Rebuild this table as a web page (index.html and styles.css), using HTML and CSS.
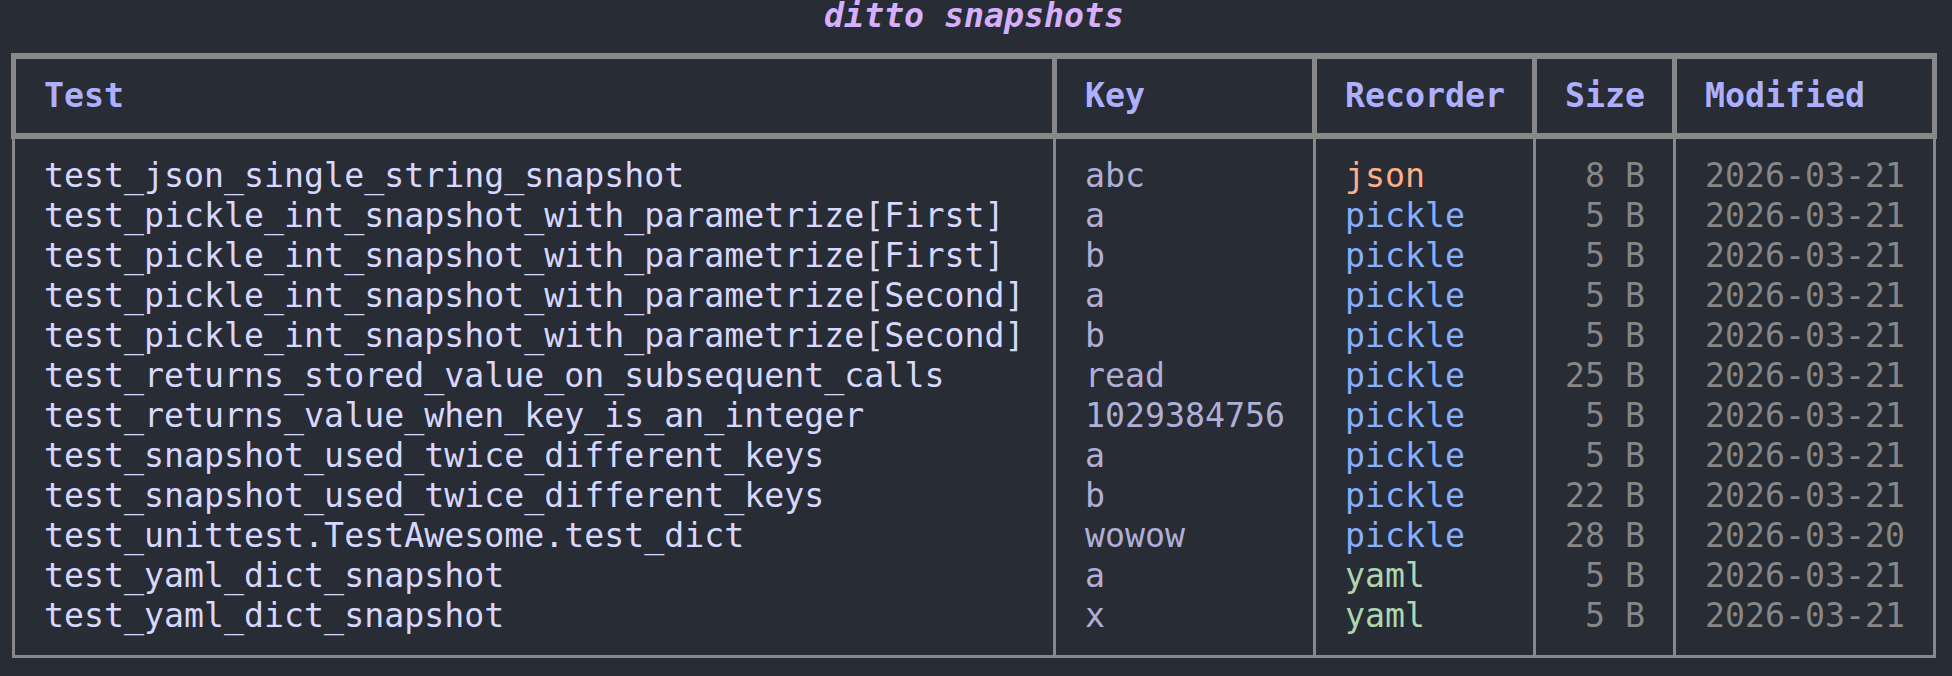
FILE: index.html
```html
<!DOCTYPE html>
<html lang="en">

<head>
    <meta charset="UTF-8">
    <meta name="viewport" content="width=device-width, initial-scale=1.0">
    <title>ditto snapshots</title>
    <link rel="stylesheet" href="styles.css">
</head>

<body>
    <div class="console">
        <div class="title">ditto snapshots</div>

        <div class="head">
            <div class="cell">Test</div>
            <div class="cell">Key</div>
            <div class="cell">Recorder</div>
            <div class="cell">Size</div>
            <div class="cell">Modified</div>
        </div>

        <div class="body">
            <div class="row">
                <div class="cell test">test_json_single_string_snapshot</div>
                <div class="cell key">abc</div>
                <div class="cell json">json</div>
                <div class="cell size">8 B</div>
                <div class="cell date">2026-03-21</div>
            </div>
            <div class="row">
                <div class="cell test">test_pickle_int_snapshot_with_parametrize[First]</div>
                <div class="cell key">a</div>
                <div class="cell pickle">pickle</div>
                <div class="cell size">5 B</div>
                <div class="cell date">2026-03-21</div>
            </div>
            <div class="row">
                <div class="cell test">test_pickle_int_snapshot_with_parametrize[First]</div>
                <div class="cell key">b</div>
                <div class="cell pickle">pickle</div>
                <div class="cell size">5 B</div>
                <div class="cell date">2026-03-21</div>
            </div>
            <div class="row">
                <div class="cell test">test_pickle_int_snapshot_with_parametrize[Second]</div>
                <div class="cell key">a</div>
                <div class="cell pickle">pickle</div>
                <div class="cell size">5 B</div>
                <div class="cell date">2026-03-21</div>
            </div>
            <div class="row">
                <div class="cell test">test_pickle_int_snapshot_with_parametrize[Second]</div>
                <div class="cell key">b</div>
                <div class="cell pickle">pickle</div>
                <div class="cell size">5 B</div>
                <div class="cell date">2026-03-21</div>
            </div>
            <div class="row">
                <div class="cell test">test_returns_stored_value_on_subsequent_calls</div>
                <div class="cell key">read</div>
                <div class="cell pickle">pickle</div>
                <div class="cell size">25 B</div>
                <div class="cell date">2026-03-21</div>
            </div>
            <div class="row">
                <div class="cell test">test_returns_value_when_key_is_an_integer</div>
                <div class="cell key">1029384756</div>
                <div class="cell pickle">pickle</div>
                <div class="cell size">5 B</div>
                <div class="cell date">2026-03-21</div>
            </div>
            <div class="row">
                <div class="cell test">test_snapshot_used_twice_different_keys</div>
                <div class="cell key">a</div>
                <div class="cell pickle">pickle</div>
                <div class="cell size">5 B</div>
                <div class="cell date">2026-03-21</div>
            </div>
            <div class="row">
                <div class="cell test">test_snapshot_used_twice_different_keys</div>
                <div class="cell key">b</div>
                <div class="cell pickle">pickle</div>
                <div class="cell size">22 B</div>
                <div class="cell date">2026-03-21</div>
            </div>
            <div class="row">
                <div class="cell test">test_unittest.TestAwesome.test_dict</div>
                <div class="cell key">wowow</div>
                <div class="cell pickle">pickle</div>
                <div class="cell size">28 B</div>
                <div class="cell date">2026-03-20</div>
            </div>
            <div class="row">
                <div class="cell test">test_yaml_dict_snapshot</div>
                <div class="cell key">a</div>
                <div class="cell yaml">yaml</div>
                <div class="cell size">5 B</div>
                <div class="cell date">2026-03-21</div>
            </div>
            <div class="row">
                <div class="cell test">test_yaml_dict_snapshot</div>
                <div class="cell key">x</div>
                <div class="cell yaml">yaml</div>
                <div class="cell size">5 B</div>
                <div class="cell date">2026-03-21</div>
            </div>
        </div>
    </div>
</body>

</html>
```

FILE: styles.css
```css
body {
    margin: 0;
    background-color: #282c34;
    font-family: "DejaVu Sans Mono", monospace;
    font-size: 33.24px;
    line-height: 40px;
    color: #d7d7ff;
}

.console {
    width: 1940px;
    padding-left: 4px;
}

.title {
    line-height: 32px;
    padding-bottom: 4px;
    text-align: center;
    color: #d7afff;
    font-weight: bold;
    font-style: italic;
}

/* the grid background shows through the gaps as column rules */
.head,
.body {
    display: grid;
    width: fit-content;
    background-color: #888888;
}

.head {
    margin: 17px 0 0 7px;
    grid-template-columns: 1036px 255px 215px 135px 255px;
    column-gap: 5px;
    border: solid #888888;
    border-width: 6px 5px;
    color: #afafff;
    font-weight: bold;
}

.body {
    margin-left: 8px;
    grid-template-columns: 1038px 257px 217px 137px 257px;
    column-gap: 3px;
    border: 3px solid #888888;
    border-top: none;
}

.row {
    display: contents;
}

.cell {
    background-color: #282c34;
    white-space: nowrap;
}

.head .cell {
    padding: 17px 27px 17px 28px;
}

.body .cell {
    padding: 0 28px 0 29px;
}

.row:first-child .cell {
    padding-top: 17px;
}

.row:last-child .cell {
    padding-bottom: 19px;
}

.key {
    color: #afafd7;
}

.json {
    color: #ffaf87;
}

.pickle {
    color: #87afff;
}

.yaml {
    color: #afd7af;
}

.size {
    text-align: right;
    color: #878787;
}

.date {
    color: #878787;
}
```
